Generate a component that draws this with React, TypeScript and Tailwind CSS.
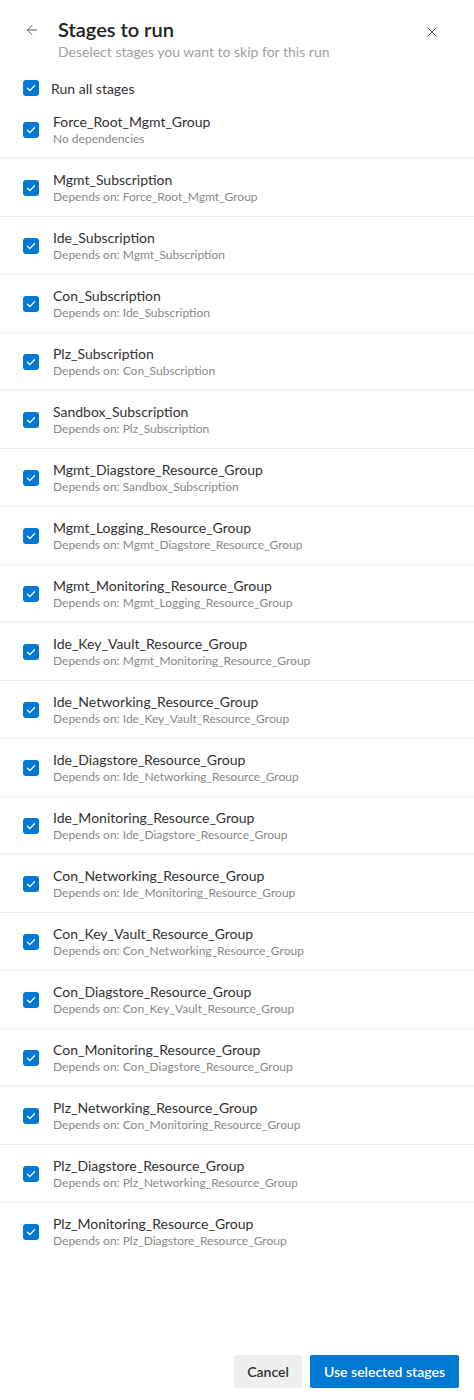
import { ArrowLeft, X } from "lucide-react";

const stages: { name: string; dep: string | null }[] = [
  { name: "Force_Root_Mgmt_Group", dep: null },
  { name: "Mgmt_Subscription", dep: "Force_Root_Mgmt_Group" },
  { name: "Ide_Subscription", dep: "Mgmt_Subscription" },
  { name: "Con_Subscription", dep: "Ide_Subscription" },
  { name: "Plz_Subscription", dep: "Con_Subscription" },
  { name: "Sandbox_Subscription", dep: "Plz_Subscription" },
  { name: "Mgmt_Diagstore_Resource_Group", dep: "Sandbox_Subscription" },
  { name: "Mgmt_Logging_Resource_Group", dep: "Mgmt_Diagstore_Resource_Group" },
  { name: "Mgmt_Monitoring_Resource_Group", dep: "Mgmt_Logging_Resource_Group" },
  { name: "Ide_Key_Vault_Resource_Group", dep: "Mgmt_Monitoring_Resource_Group" },
  { name: "Ide_Networking_Resource_Group", dep: "Ide_Key_Vault_Resource_Group" },
  { name: "Ide_Diagstore_Resource_Group", dep: "Ide_Networking_Resource_Group" },
  { name: "Ide_Monitoring_Resource_Group", dep: "Ide_Diagstore_Resource_Group" },
  { name: "Con_Networking_Resource_Group", dep: "Ide_Monitoring_Resource_Group" },
  { name: "Con_Key_Vault_Resource_Group", dep: "Con_Networking_Resource_Group" },
  { name: "Con_Diagstore_Resource_Group", dep: "Con_Key_Vault_Resource_Group" },
  { name: "Con_Monitoring_Resource_Group", dep: "Con_Diagstore_Resource_Group" },
  { name: "Plz_Networking_Resource_Group", dep: "Con_Monitoring_Resource_Group" },
  { name: "Plz_Diagstore_Resource_Group", dep: "Plz_Networking_Resource_Group" },
  { name: "Plz_Monitoring_Resource_Group", dep: "Plz_Diagstore_Resource_Group" },
];

function Check() {
  return (
    <span className="flex size-4 shrink-0 items-center justify-center rounded-[3px] bg-[#0078d4]">
      <svg viewBox="0 0 16 16" className="size-4" fill="none">
        <path d="M4.5 8.3 L6.9 10.6 L11.5 5.8" stroke="white" strokeWidth="1.3" strokeLinecap="round" strokeLinejoin="round" />
      </svg>
    </span>
  );
}

export default function App() {
  return (
    <div
      className="flex min-h-[1400px] w-full flex-col bg-white text-[#323130]"
      style={{ fontFamily: '"Lato", "Noto Sans", sans-serif' }}
    >
      <header className="flex items-start pt-4 pl-6 pr-[34px]">
        <button type="button" aria-label="Back" className="mt-[6px] flex size-4 items-center justify-center text-[#484644]">
          <ArrowLeft className="size-4" strokeWidth={1.3} />
        </button>
        <div className="ml-[18px] flex-1">
          <h1 className="text-[20px] leading-[26px] font-semibold text-[#201f1e]">Stages to run</h1>
          <p className="text-[14px] leading-5 text-[#a19f9d]">Deselect stages you want to skip for this run</p>
        </div>
        <button type="button" aria-label="Close" className="mt-[8px] flex size-4 items-center justify-center text-[#323130]">
          <X className="size-4" strokeWidth={1.2} />
        </button>
      </header>

      <label className="mt-4 flex h-5 items-center gap-3 px-[23px] text-[14px]">
        <Check />
        <span>Run all stages</span>
      </label>

      <ul className="mt-[3px]">
        {stages.map((s, i) => (
          <li
            key={s.name}
            className={`flex items-center gap-[14px] px-[23px] pt-3 pb-[11px] ${i < stages.length - 1 ? "border-b border-[#ebebeb]" : ""}`}
          >
            <Check />
            <div className="min-w-0">
              <div className="truncate text-[14px] leading-[18px]">{s.name}</div>
              <div className="truncate text-[12px] leading-4 text-[#8a8886]">
                {s.dep ? `Depends on: ${s.dep}` : "No dependencies"}
              </div>
            </div>
          </li>
        ))}
      </ul>

      <footer className="mt-auto flex justify-end gap-2 pr-[15px] pb-3">
        <button type="button" className="h-[33px] w-[68px] rounded-[2px] bg-[#efefef] text-[14px] font-semibold text-[#323130]">
          Cancel
        </button>
        <button type="button" className="h-[33px] w-[149px] rounded-[2px] bg-[#0078d4] text-[14px] font-semibold text-white">
          Use selected stages
        </button>
      </footer>
    </div>
  );
}
